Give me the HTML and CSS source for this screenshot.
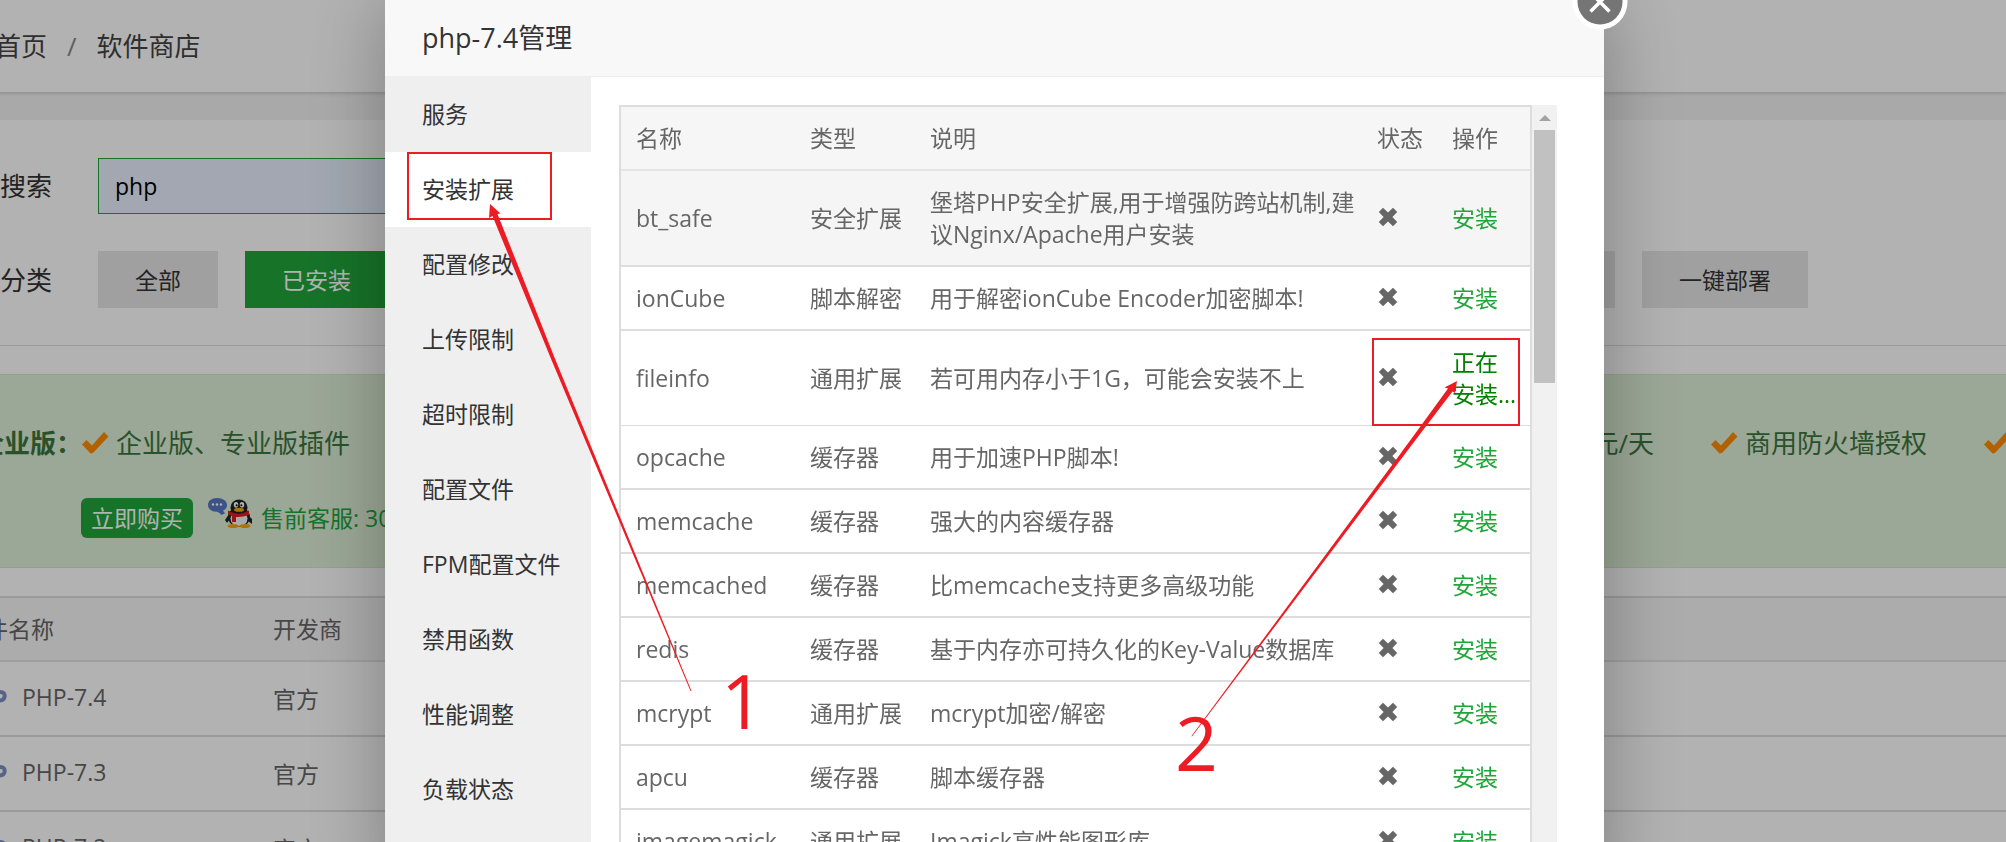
FILE: index.html
```html
<!DOCTYPE html>
<html lang="zh-CN">
<head>
<meta charset="utf-8">
<title>软件商店</title>
<link rel="stylesheet" href="styles.css">
</head>
<body>
<svg class="defs" aria-hidden="true">
  <symbol id="tick" viewBox="0 0 27 24"><path d="M0 13.500L4.500 9L10 14.500L22 1L26.500 5.500L11 22L8.500 22.500Z"/></symbol>
  <symbol id="cross" viewBox="0 0 20 20"><path d="M5 .8L10 5.600L15 .8L19.200 5L14.400 10L19.200 15L15 19.200L10 14.400L5 19.200L.8 15L5.600 10L.8 5Z"/></symbol>
  <symbol id="php" viewBox="0 0 44 24"><g fill="none" stroke="#7d8fc4" stroke-width="4"><path d="M3 22L6 6H10Q15 6 14 11Q13 15 9 15H5"/><path d="M20 1L17 16M19 7H23Q27 7 26 11L25 16"/><path d="M31 22L33.500 7H37Q42.500 7 41.500 12Q41 15.500 36 15.500H33"/></g></symbol>
</svg>
<div class="page">
  <header class="topbar">
    <nav class="crumbs"><a href="#">首页</a><span class="slash">/</span><span>软件商店</span></nav>
  </header>
  <main class="main">
    <section class="filters">
      <div class="filter-row">
        <label for="search">搜索</label>
        <input id="search" class="search" type="text" value="php">
      </div>
      <div class="filter-row">
        <span>分类</span>
        <div class="cats">
          <button class="cat">全部</button><button class="cat cat-on">已安装</button><button class="cat">运行环境</button><button class="cat">系统工具</button><button class="cat">宝塔插件</button><button class="cat">专业版插件</button><button class="cat">企业版插件</button><button class="cat">第三方应用</button><button class="cat">一键部署</button>
        </div>
      </div>
    </section>
    <section class="promo">
      <div class="perks">
        <b>企业版：</b>
        <ul>
          <li><svg class="tick"><use href="#tick"/></svg>企业版、专业版插件</li>
          <li class="price"><svg class="tick"><use href="#tick"/></svg>低至1.18元/天</li>
          <li><svg class="tick"><use href="#tick"/></svg>商用防火墙授权</li>
          <li><svg class="tick"><use href="#tick"/></svg>年付会员</li>
        </ul>
      </div>
      <div class="buy-row">
        <button class="buy">立即购买</button>
        <a class="service" href="#">
          <svg class="qq" viewBox="0 0 44 30">
            <path d="M9 0C3.500 0 0 3 0 7C0 10 2 12.500 6 13.500Q12 13.500 13 17L17 15.500L15 12.500Q19 11 19 7C19 3 15 0 9 0Z" fill="#5577c4"/>
            <g fill="#fff"><circle cx="5" cy="6.500" r="1.200"/><circle cx="9" cy="6.500" r="1.200"/><circle cx="13" cy="6.500" r="1.200"/></g>
            <path d="M21 16L17 22L19 25L22 21M39 16L44 21V26L39 22" fill="#222"/>
            <ellipse cx="31" cy="19" rx="11" ry="10" fill="#222"/>
            <ellipse cx="31" cy="20.500" rx="8.500" ry="8" fill="#f4f4f4"/>
            <ellipse cx="31" cy="9.500" rx="8.500" ry="8" fill="#222"/>
            <ellipse cx="28" cy="6.800" rx="2.200" ry="2.800" fill="#fff"/><ellipse cx="34" cy="6.800" rx="2.200" ry="2.800" fill="#fff"/>
            <circle cx="28.600" cy="7.300" r="1"/><circle cx="33.400" cy="7.300" r="1"/>
            <ellipse cx="31" cy="11.800" rx="5" ry="2" fill="#f5a800"/>
            <path d="M20 12.500Q31 19 41 12.500V17Q34 19.500 28 19V24H24V18Q21 17 20 16Z" fill="#e01b24"/>
            <ellipse cx="25" cy="28" rx="5.500" ry="2" fill="#f5a800"/><ellipse cx="37" cy="28" rx="5.500" ry="2" fill="#f5a800"/>
          </svg>
          <span>售前客服: 3007255432</span>
        </a>
      </div>
    </section>
    <table class="soft">
      <colgroup><col class="c-soft"><col></colgroup>
      <thead><tr><th>软件名称</th><th>开发商</th></tr></thead>
      <tbody>
        <tr><td><span class="soft-name"><svg class="php"><use href="#php"/></svg>PHP-7.4</span></td><td>官方</td></tr>
        <tr><td><span class="soft-name"><svg class="php"><use href="#php"/></svg>PHP-7.3</span></td><td>官方</td></tr>
        <tr><td><span class="soft-name"><svg class="php"><use href="#php"/></svg>PHP-7.2</span></td><td>官方</td></tr>
      </tbody>
    </table>
  </main>
</div>

<div class="overlay">
  <div class="modal" role="dialog" aria-labelledby="dlg-title">
    <h2 id="dlg-title" class="modal-title">php-7.4管理</h2>
    <button class="close" aria-label="关闭"><svg viewBox="0 0 56 56"><circle cx="28" cy="28" r="27.500" fill="#fff"/><circle cx="28" cy="28" r="22.500" fill="#757575"/><path d="M18.500 18.500L37.500 37.500M37.500 18.500L18.500 37.500" stroke="#fff" stroke-width="3.500"/></svg></button>
    <div class="modal-body">
      <nav class="side">
        <a href="#">服务</a><a href="#" class="on">安装扩展</a><a href="#">配置修改</a><a href="#">上传限制</a><a href="#">超时限制</a><a href="#">配置文件</a><a href="#">FPM配置文件</a><a href="#">禁用函数</a><a href="#">性能调整</a><a href="#">负载状态</a>
      </nav>
      <div class="content">
        <table class="ext">
          <colgroup><col class="c-name"><col class="c-type"><col class="c-desc"><col class="c-stat"><col></colgroup>
          <thead><tr><th>名称</th><th>类型</th><th>说明</th><th>状态</th><th>操作</th></tr></thead>
          <tbody>
            <tr class="hover"><td>bt_safe</td><td>安全扩展</td><td>堡塔PHP安全扩展,用于增强防跨站机制,建议Nginx/Apache用户安装</td><td><svg class="cross"><use href="#cross"/></svg></td><td><a href="#">安装</a></td></tr>
            <tr><td>ionCube</td><td>脚本解密</td><td>用于解密ionCube Encoder加密脚本!</td><td><svg class="cross"><use href="#cross"/></svg></td><td><a href="#">安装</a></td></tr>
            <tr class="busy"><td>fileinfo</td><td>通用扩展</td><td>若可用内存小于1G，可能会安装不上</td><td><svg class="cross"><use href="#cross"/></svg></td><td><a href="#">正在<br>安装...</a></td></tr>
            <tr><td>opcache</td><td>缓存器</td><td>用于加速PHP脚本!</td><td><svg class="cross"><use href="#cross"/></svg></td><td><a href="#">安装</a></td></tr>
            <tr><td>memcache</td><td>缓存器</td><td>强大的内容缓存器</td><td><svg class="cross"><use href="#cross"/></svg></td><td><a href="#">安装</a></td></tr>
            <tr><td>memcached</td><td>缓存器</td><td>比memcache支持更多高级功能</td><td><svg class="cross"><use href="#cross"/></svg></td><td><a href="#">安装</a></td></tr>
            <tr><td>redis</td><td>缓存器</td><td>基于内存亦可持久化的Key-Value数据库</td><td><svg class="cross"><use href="#cross"/></svg></td><td><a href="#">安装</a></td></tr>
            <tr><td>mcrypt</td><td>通用扩展</td><td>mcrypt加密/解密</td><td><svg class="cross"><use href="#cross"/></svg></td><td><a href="#">安装</a></td></tr>
            <tr><td>apcu</td><td>缓存器</td><td>脚本缓存器</td><td><svg class="cross"><use href="#cross"/></svg></td><td><a href="#">安装</a></td></tr>
            <tr><td>imagemagick</td><td>通用扩展</td><td>Imagick高性能图形库</td><td><svg class="cross"><use href="#cross"/></svg></td><td><a href="#">安装</a></td></tr>
          </tbody>
        </table>
        <div class="scroll" aria-hidden="true"><svg class="up" viewBox="0 0 12 6"><path d="M0 6L6 0L12 6Z"/></svg><div class="thumb"></div></div>
      </div>
    </div>
    <svg class="notes" viewBox="0 0 1219 842" aria-hidden="true">
      <g fill="none" stroke="#ed1c24" stroke-width="2"><rect x="23" y="153" width="143" height="66"/><rect x="988" y="339" width="146" height="86"/></g>
      <g fill="#ed1c24">
        <path d="M105 204L115.500 213.500L112.500 214L170.500 360L306.500 691L305.500 691L166.500 360L107.500 216L104 218Z"/>
        <path d="M1072 381L1070 393L1067.500 391.500L1030.500 440L807 736.500L806.500 736L1025.500 440L1063 388.500L1059.500 387.500Z"/>
      </g>
    </svg>
    <span class="step step-1">1</span>
    <span class="step step-2">2</span>
  </div>
</div>
</body>
</html>
```
FILE: styles.css
```css
* { box-sizing: border-box; }
html, body { height: 100%; }
body {
  margin: 0;
  overflow: hidden;
  background: #f3f3f3;
  color: #333;
  font: 23px/32px "Open Sans", "Noto Sans CJK SC", sans-serif;
}
a { color: inherit; text-decoration: none; }
button, input { font: inherit; color: inherit; border: 0; padding: 0; margin: 0; }
th { font-weight: 400; text-align: left; }
.defs { position: absolute; width: 0; height: 0; }

/* store page */
.page { margin-left: -22px; }
.topbar {
  height: 92px;
  padding: 0 17px;
  display: flex;
  align-items: center;
  background: #fff;
  box-shadow: 0 1px 4px rgba(0, 0, 0, .2);
  font-size: 26px;
}
.crumbs { display: flex; gap: 20px; color: #444; }
.slash { color: #888; }
.main { margin-top: 28px; background: #fff; min-height: 722px; }
.filters {
  display: flex;
  flex-direction: column;
  gap: 37px;
  padding: 38px 0 37px 22px;
  border-bottom: 1px solid #ddd;
}
.filter-row { display: flex; align-items: center; gap: 46px; font-size: 26px; white-space: nowrap; }
.search {
  width: 600px;
  height: 56px;
  padding: 0 16px;
  border: 1px solid #20a53a;
  background: #e8f0fe;
  color: #000;
  font-size: 23px;
}
.cats { display: flex; gap: 27px; }
.cat { flex: none; height: 57px; padding: 0 37px; background: #e6e6e6; font-size: 23px; }
.cat-on { background: #20a53a; color: #fff; }

.promo {
  margin: 28px 0;
  padding: 50px 0 29px;
  border: solid #d0e9c6;
  border-width: 1px 0;
  background: #dff0d8;
  color: #3c763d;
}
.perks { display: flex; font-size: 26px; line-height: 36px; white-space: nowrap; }
.perks ul { display: flex; gap: 57px; margin: 0; padding: 0; list-style: none; }
.perks li { display: flex; flex: none; align-items: center; gap: 7px; }
.perks .price { width: 1247px; justify-content: flex-end; }
.tick { width: 27px; height: 24px; fill: #ff8c00; }
.buy-row { display: flex; gap: 15px; margin: 37px 0 0 103px; }
.buy { height: 40px; padding: 0 10px; border-radius: 6px; background: #20a53a; color: #fff; }
.service { display: flex; gap: 9px; color: #20a53a; line-height: 40px; white-space: nowrap; }
.qq { width: 44px; height: 30px; }

.soft { width: 100%; border-spacing: 0; border-top: 2px solid #ddd; table-layout: fixed; color: #666; }
.c-soft { width: 295px; }
.soft th { height: 64px; padding: 0; background: #f6f6f6; border-bottom: 2px solid #e3e3e3; }
.soft td { height: 75px; padding: 0; border-bottom: 2px solid #ddd; }
.soft th:first-child { text-indent: -16px; }
.soft-name { display: flex; align-items: center; gap: 15px; margin-left: -15px; padding-bottom: 4px; }
.php { width: 44px; height: 24px; }

/* dialog */
.overlay {
  position: fixed;
  inset: 0;
  overflow: hidden;
  display: flex;
  justify-content: center;
  align-items: flex-start;
  padding-right: 17px;
  background: rgba(0, 0, 0, .3);
}
.modal {
  position: relative;
  width: 1219px;
  max-width: 100%;
  background: #fff;
  box-shadow: 1px 1px 75px rgba(0, 0, 0, .3);
}
.modal-title {
  margin: 0;
  padding: 20px 37px;
  border-bottom: 1px solid #eee;
  background: #f8f8f8;
  font-size: 27px;
  font-weight: 400;
  line-height: 36px;
}
.close { position: absolute; top: -26px; right: -24px; width: 56px; height: 56px; background: none; }
.close svg { display: block; width: 100%; height: 100%; }
.modal-body { display: flex; }
.side { flex: none; width: 206px; background: #efefef; }
.side a { display: block; height: 75px; padding-left: 37px; line-height: 75px; white-space: nowrap; }
.side .on { background: #fff; }
.content { flex: 1; display: flex; align-items: stretch; padding: 28px 47px 28px 28px; }
.ext { flex: 1; border: 2px solid #ddd; border-spacing: 0; table-layout: fixed; color: #666; }
.c-name { width: 174px; }
.c-type { width: 120px; }
.c-desc { width: 447px; }
.c-stat { width: 75px; }
.ext th, .ext td { padding: 15px 0 15px 15px; border-bottom: 2px solid #ddd; }
.ext th { background: #f6f6f6; border-color: #e5e5e5; }
.ext .hover td { background: #f5f5f5; }
.ext td { white-space: nowrap; }
.ext td:nth-child(3) { white-space: normal; }
.ext .busy td { border-bottom-width: 1px; }
.ext td a { color: #20a53a; }
.ext .busy a { color: #008000; }
.cross { display: block; width: 20px; height: 20px; margin: 0 0 3px 1px; fill: #666; }
.scroll { width: 25px; padding: 10px 2px 0; background: #f1f1f1; }
.up { display: block; width: 12px; height: 6px; margin: 0 auto 9px; fill: #a3a3a3; }
.thumb { height: 253px; background: #c1c1c1; }

/* marks drawn over the dialog */
.notes { position: absolute; top: 0; left: 0; width: 1219px; height: 842px; pointer-events: none; }
.step { position: absolute; color: #ed1c24; font-size: 75px; line-height: 80px; }
.step-1 { top: 660px; left: 336px; }
.step-2 { top: 702px; left: 790px; }
```
